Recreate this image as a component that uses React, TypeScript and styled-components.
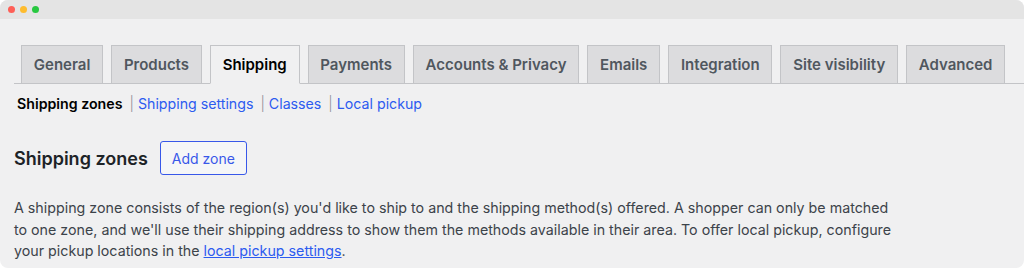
import React from "react";
import styled, { createGlobalStyle } from "styled-components";

const GlobalStyle = createGlobalStyle`
  html, body {
    margin: 0;
    padding: 0;
    background: #ffffff;
  }
  body {
    font-family: Inter, "Liberation Sans", Arial, sans-serif;
    -webkit-font-smoothing: antialiased;
  }
`;

const Window = styled.div`
  width: 1024px;
  height: 268px;
  border-radius: 8px;
  overflow: hidden;
  background: #f0f0f1;
  display: flex;
  flex-direction: column;
`;

const TitleBar = styled.div`
  height: 19px;
  flex: none;
  background: #e4e4e4;
  display: flex;
  align-items: center;
  gap: 5px;
  padding-left: 8px;
`;

const Light = styled.span<{ $color: string }>`
  width: 7px;
  height: 7px;
  border-radius: 50%;
  background: ${(p) => p.$color};
`;

const Content = styled.div`
  padding: 26px 0 0 14px;
`;

const TabBar = styled.nav`
  display: flex;
  gap: 8px;
  padding-left: 7px;
  border-bottom: 1px solid #c3c4c7;
`;

const Tab = styled.a<{ $active?: boolean }>`
  display: block;
  height: 37px;
  line-height: 37px;
  padding: 0 11.8px;
  margin-bottom: -1px;
  border: 1px solid #c3c4c7;
  border-bottom-color: ${(p) => (p.$active ? "#f0f0f1" : "#c3c4c7")};
  background: ${(p) => (p.$active ? "#f0f0f1" : "#dcdcde")};
  color: ${(p) => (p.$active ? "#000" : "#50575e")};
  font-size: 15px;
  font-weight: 600;
  white-space: nowrap;
`;

const SubNav = styled.ul`
  list-style: none;
  margin: 11px 0 0 3px;
  padding: 0;
  display: flex;
  align-items: baseline;
  font-size: 14.2px;
  color: #646970;
`;

const SubItem = styled.li`
  display: flex;
  gap: 4px;
`;

const Separator = styled.span`
  margin-left: 7px;
  color: #8c8f94;
  font-weight: 300;
`;

const SubLink = styled.a<{ $current?: boolean }>`
  color: ${(p) => (p.$current ? "#000" : "#2c5bf0")};
  font-weight: ${(p) => (p.$current ? 600 : 400)};
  text-decoration: none;
`;

const HeadingRow = styled.div`
  display: flex;
  align-items: center;
  gap: 12px;
  margin-top: 29px;
`;

const Heading = styled.h2`
  margin: 0;
  font-size: 18px;
  font-weight: 600;
  color: #1d2327;
`;

const AddButton = styled.button`
  height: 34px;
  padding: 0 11px;
  border: 1px solid #3858e9;
  border-radius: 3px;
  background: #f5f6f7;
  color: #3858e9;
  font: inherit;
  font-size: 14px;
`;

const Text = styled.p`
  margin: 22px 0 0;
  width: 890px;
  font-size: 14.25px;
  line-height: 21.5px;
  color: #3c434a;
`;

const TextLink = styled.a`
  color: #2c5bf0;
  text-decoration: underline;
`;

const tabs = [
  "General",
  "Products",
  "Shipping",
  "Payments",
  "Accounts & Privacy",
  "Emails",
  "Integration",
  "Site visibility",
  "Advanced",
];

const sections = ["Shipping zones", "Shipping settings", "Classes", "Local pickup"];

export default function App() {
  return (
    <>
      <GlobalStyle />
      <Window>
        <TitleBar>
          <Light $color="#fe5f57" />
          <Light $color="#febc2e" />
          <Light $color="#28c840" />
        </TitleBar>
        <Content>
          <TabBar>
            {tabs.map((t) => (
              <Tab key={t} $active={t === "Shipping"}>
                {t}
              </Tab>
            ))}
          </TabBar>
          <SubNav>
            {sections.map((s, i) => (
              <SubItem key={s}>
                {i > 0 && <Separator>|</Separator>}
                <SubLink $current={i === 0}>{s}</SubLink>
              </SubItem>
            ))}
          </SubNav>
          <HeadingRow>
            <Heading>Shipping zones</Heading>
            <AddButton>Add zone</AddButton>
          </HeadingRow>
          <Text>
            A shipping zone consists of the region(s) you'd like to ship to and the shipping method(s) offered. A
            shopper can only be matched to one zone, and we'll use their shipping address to show them the methods
            available in their area. To offer local pickup, configure your pickup locations in the{" "}
            <TextLink>local pickup settings</TextLink>.
          </Text>
        </Content>
      </Window>
    </>
  );
}
